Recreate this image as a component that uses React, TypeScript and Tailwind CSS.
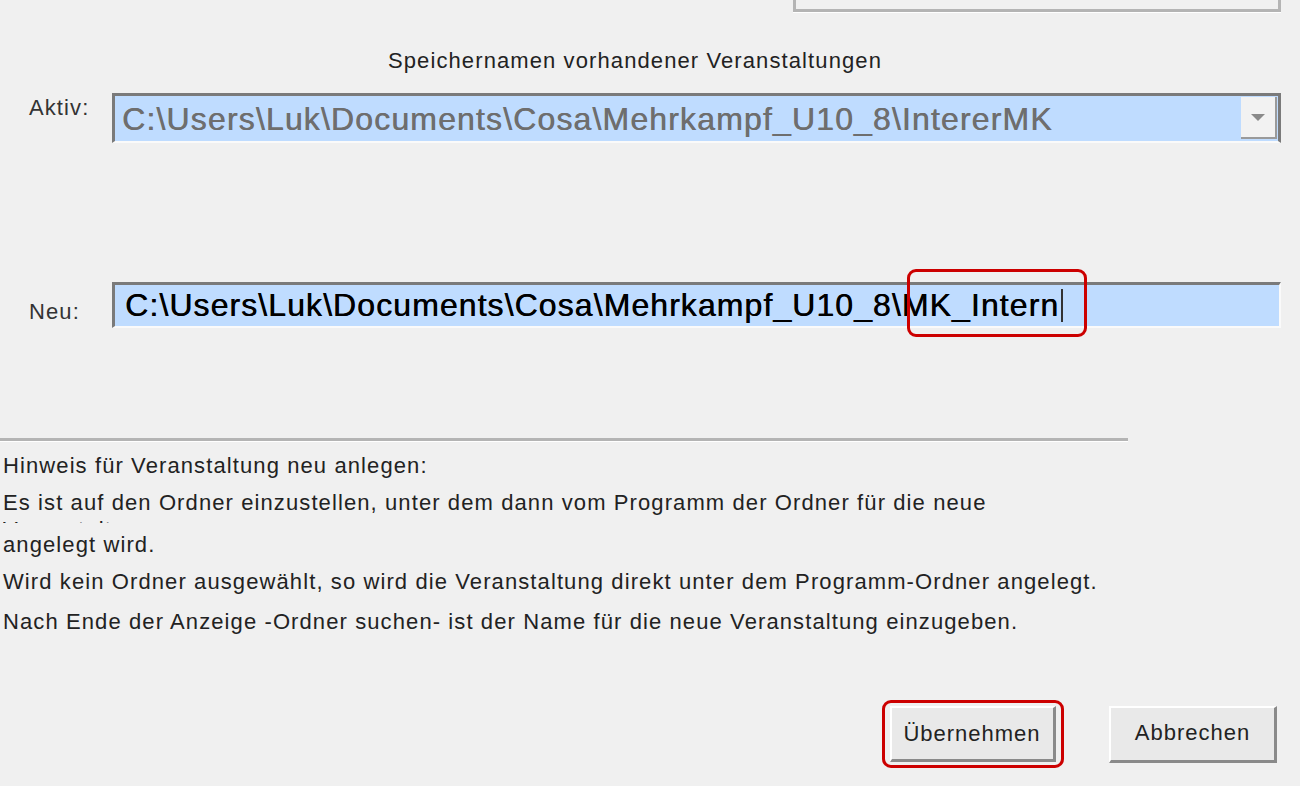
import React from "react";

const font = { fontFamily: '"Liberation Sans", Arial, sans-serif' };

export default function App() {
  return (
    <div className="w-[1300px] h-[786px] bg-[#f0f0f0] overflow-hidden relative text-[#1a1a1a]" style={font}>
      {/* top group box remnant */}
      <div className="ml-[793px] w-[488px] h-[12px] border-[3px] border-t-0 border-[#b4b4b4] shadow-[0_1px_0_#fff]" />

      {/* title */}
      <div className="mt-[37px] ml-[388px] text-[22px] leading-[24px] tracking-[1.1px] text-[#222]">
        Speichernamen vorhandener Veranstaltungen
      </div>

      {/* Aktiv row */}
      <div className="mt-[20px] flex items-start">
        <div className="w-[112px] pl-[29px] pt-[3px] text-[22px] leading-[24px] tracking-[1.1px] text-[#333]">Aktiv:</div>
        <div className="w-[1169px] h-[50px] flex border-t-[3px] border-l-[3px] border-[#7a7a7a] border-b-[2px] border-b-[#fafafa] border-r-[3px] border-r-[#7a7a7a] bg-[#bfdcff]">
          <div className="flex-1 pl-[7px] text-[32px] leading-[46px] text-[#6e6e6e] whitespace-nowrap tracking-[1.15px] [text-shadow:0.5px_0_0_#6e6e6e]">
            C:\Users\Luk\Documents\Cosa\Mehrkampf_U10_8\IntererMK
          </div>
          <div className="w-[36px] h-[42px] mt-[1px] mr-[1px] bg-[#f2f2f2] border-r-[2px] border-b-[2px] border-[#9a9a9a] flex items-center justify-center">
            <svg width="16" height="10" viewBox="0 0 16 10">
              <polygon points="1,2 15,2 8,9" fill="#8a8a8a" />
            </svg>
          </div>
        </div>
      </div>

      {/* Neu row */}
      <div className="mt-[139px] flex items-start">
        <div className="w-[112px] pl-[29px] pt-[18px] text-[22px] leading-[24px] tracking-[1.1px] text-[#333]">Neu:</div>
        <div className="relative w-[1169px] h-[46px] border-t-[3px] border-l-[3px] border-[#7a7a7a] border-b-[2px] border-b-[#fafafa] border-r-[2px] border-r-[#fafafa] bg-[#bfdcff]">
          <div className="pl-[10px] h-[41px] text-[32px] leading-[41px] text-black whitespace-nowrap flex items-center tracking-[1.08px] [text-shadow:0.5px_0_0_#000]">
            <span>C:\Users\Luk\Documents\Cosa\Mehrkampf_U10_8\MK_Intern</span>
            <span className="ml-[2px] w-[2px] h-[33px] bg-[#333] inline-block" />
          </div>
          <div className="absolute left-[792px] top-[-16px] w-[180px] h-[68px] border-[3px] border-[#cc0000] rounded-[9px]" />
        </div>
      </div>

      {/* separator */}
      <div className="mt-[110px] w-[1128px] h-[4px] bg-[#b4b4b4] border-b border-white" />

      {/* hint text */}
      <div className="mt-[10px] pl-[3px] text-[22px] tracking-[1.1px] text-[#222]">
        <div className="leading-[28px]">Hinweis für Veranstaltung neu anlegen:</div>
        <div className="mt-[9px] leading-[28px]">
          Es ist auf den Ordner einzustellen, unter dem dann vom Programm der Ordner für die neue
        </div>
        <div className="mt-[3px] h-[3px] overflow-hidden">
          <div className="leading-[28px] -mt-[4px]">Veranstaltung</div>
        </div>
        <div className="mt-[8px] leading-[28px]">angelegt wird.</div>
        <div className="mt-[9px] leading-[28px]">
          Wird kein Ordner ausgewählt, so wird die Veranstaltung direkt unter dem Programm-Ordner angelegt.
        </div>
        <div className="mt-[12px] leading-[28px]">
          Nach Ende der Anzeige -Ordner suchen- ist der Name für die neue Veranstaltung einzugeben.
        </div>
      </div>

      {/* buttons */}
      <div className="mt-[64px] flex">
        <div className="ml-[882px] w-[182px] h-[68px] border-[3px] border-[#cc0000] rounded-[9px] flex items-center justify-center">
          <button className="w-[166px] h-[56px] bg-[#e9e9e9] border-t-[2px] border-l-[2px] border-white border-r-[3px] border-b-[3px] border-r-[#8a8a8a] border-b-[#8a8a8a] text-[22px] tracking-[1px] text-[#222] -ml-[1px]" style={font}>
            Übernehmen
          </button>
        </div>
        <div className="ml-[45px] mt-[6px]">
          <button className="w-[168px] h-[57px] bg-[#e9e9e9] border-t-[2px] border-l-[2px] border-white border-r-[3px] border-b-[3px] border-r-[#8a8a8a] border-b-[#8a8a8a] text-[22px] tracking-[1px] text-[#222] pb-[3px]" style={font}>
            Abbrechen
          </button>
        </div>
      </div>
    </div>
  );
}
